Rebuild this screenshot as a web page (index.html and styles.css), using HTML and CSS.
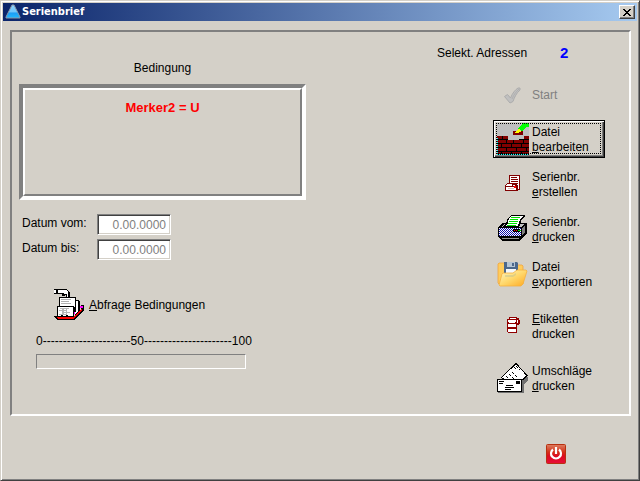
FILE: index.html
```html
<!DOCTYPE html>
<html lang="de">
<head>
<meta charset="utf-8">
<title>Serienbrief</title>
<link rel="stylesheet" href="styles.css">
</head>
<body>
<div class="window">
  <header class="titlebar">
    <svg class="app-icon" width="16" height="16" viewBox="0 0 16 16" aria-hidden="true">
      <defs><linearGradient id="tri" x1="0" y1="0" x2="0" y2="1"><stop offset="0" stop-color="#8ed4ff"/><stop offset=".55" stop-color="#6cc4fc"/><stop offset=".6" stop-color="#1c9cf4"/><stop offset="1" stop-color="#20b8ff"/></linearGradient></defs>
      <path d="M7 1h2l6 12v1H1v-1z" fill="url(#tri)" stroke="#8c98a8"/>
    </svg>
    <h1 class="title">Serienbrief</h1>
    <button class="close" type="button" aria-label="Schließen">
      <svg width="8" height="7" viewBox="0 0 8 7" shape-rendering="crispEdges"><path d="M0 0h2v1h1v1h2V1h1V0h2v1H7v1H6v1H5v1h1v1h1v1h1v1H6V6H5V5H3v1H2v1H0V6h1V5h1V4h1V3H2V2H1V1H0z"/></svg>
    </button>
  </header>

  <main class="panel">
    <section class="left">
      <h2 class="caption">Bedingung</h2>
      <div class="condition"><div class="condition-inner">Merker2 = U</div></div>
      <form class="dates">
        <label for="von">Datum vom:</label><input id="von" type="text" value="0.00.0000">
        <label for="bis">Datum bis:</label><input id="bis" type="text" value="0.00.0000">
      </form>
      <button class="query" type="button">
        <svg width="32" height="32" viewBox="0 0 32 32" shape-rendering="crispEdges" aria-hidden="true">
          <path d="M1 28h20l7-7v-4h3v5L21 32H4l-3-3z" fill="#000"/>
          <path d="M3 29h17v2H5z" fill="#f00"/><path d="M20 29l9-9v2l-9 9z" fill="#e00"/>
          <path d="M21 24h3v2h-3zM27 18h3v2h-3z" fill="#f0f"/>
          <path d="M22 12h3l2 2v8l-5 5z" fill="#000"/><path d="M22 13h2l1 1v9l-3 3z" fill="#fff"/><path d="M22 16h1v8h-1z" fill="#000"/>
          <path d="M6 9h17v15H6z" fill="#000"/><path d="M7 10h15v9H7z" fill="#fff"/>
          <path d="M8 11h10v1H8zM8 13h8v1H8zM8 15h10v1H8z" fill="#b0b0b0"/>
          <path d="M4 18h17v11H4z" fill="#000"/><path d="M5 19h15v9H5z" fill="#fff"/>
          <path d="M7 20h9v1H7zM6 22h7v1H6zM9 24h8v1H9zM6 26h8v1H6zM9 21h2v5H9zM13 21h1v5h-1z" fill="#b8b8b8"/>
          <path d="M8 27h2v1H8zM13 27h2v1h-2z" fill="#000"/>
          <path d="M1 1h12l3 2 1 2v5h-4V7l-2 1h-2V6H1z" fill="#000"/>
          <path d="M1 2h2v3H1zM5 2h8l2 2v5h-1V6h-3V5H5z" fill="#fff"/>
        </svg>
        <span><u>A</u>bfrage Bedingungen</span>
      </button>
      <div class="scale" id="scale">0----------------------50----------------------100</div>
      <div class="progress" role="progressbar" aria-labelledby="scale" aria-valuenow="0" aria-valuemin="0" aria-valuemax="100"></div>
    </section>

    <section class="right">
      <div class="count"><span>Selekt. Adressen</span><output class="number">2</output></div>
      <div class="actions">
        <button class="action" type="button" disabled>
          <svg width="32" height="32" viewBox="0 0 32 32" aria-hidden="true"><path d="M7.500 18.500l3-2 3 3.500c2-5 4.500-8 7.500-10h2v2c-3.500 3-5.500 7-7 11.500l-3 1.500z" fill="#c0c0c0" stroke="#acacac"/><path d="M15 21c2-5 4-7 7-10" fill="none" stroke="#b0b0b0"/></svg>
          <span>Start</span>
        </button>
        <button class="action focused" type="button">
          <svg width="32" height="32" viewBox="0 0 32 32" shape-rendering="crispEdges" aria-hidden="true">
            <path d="M0 0h32v32H0z" fill="#c0c0c0"/>
            <path d="M0 13h11v4h11v-1h5v-3h5v19H0z" fill="#000"/>
            <path d="M0 13h5v3H0zM6 13h5v3H6zM0 17h9v3H0zM10 17h6v3h-6zM17 17h9v3h-9zM27 17h5v3h-5zM27 13h5v3h-5zM0 21h4v3H0zM5 21h9v3H5zM15 21h9v3h-9zM25 21h7v3h-7zM0 25h9v3H0zM10 25h9v3h-9zM20 25h9v3h-9zM30 25h2v3h-2zM0 29h4v2H0zM5 29h9v2H5zM15 29h9v2h-9zM25 29h7v2h-7z" fill="#800000"/>
            <path d="M16 8h10v4H16z" fill="#800000"/>
            <path d="M18 10l3-4h2v2h2l-4 2z" fill="#ff0"/>
            <path d="M21 6l3-4 3-2h5v4h-3l-2 3-3 1-1-2z" fill="#0f0"/>
            <path d="M.5 32V14M0 31.500h32" stroke="#0ff" stroke-dasharray="1 1"/>
          </svg>
          <span>Datei<br><u>b</u>earbeiten</span>
        </button>
        <button class="action" type="button">
          <svg width="32" height="32" viewBox="0 0 32 32" shape-rendering="crispEdges" aria-hidden="true">
            <path d="M12 7h11v15H12z" fill="#800000"/><path d="M13 8h9v13h-9z" fill="#fff"/>
            <path d="M14 9h6v1h-6zM14 11h7v1h-7zM14 13h7v1h-7zM16 15h5v1h-5z" fill="#800000"/>
            <path d="M10 15h6l5 2v6H8v-6z" fill="#800000"/>
            <path d="M10 16h5v2H9v-1zM9 19h10v3H9zM16 17h2v1h-2z" fill="#fff"/>
            <path d="M11 20h6v1h-6z" fill="#e0c0c0"/><path d="M17 18h2v2h-2z" fill="#f00"/>
          </svg>
          <span>Serienbr.<br><u>e</u>rstellen</span>
        </button>
        <button class="action" type="button">
          <svg width="32" height="32" viewBox="0 0 32 32" shape-rendering="crispEdges" aria-hidden="true">
            <path d="M1 14l5-4h23l1 1v9l-5 5v1l-3 2H5l-2-2-2-2z" fill="#000"/>
            <path d="M4 14l4-3h20l-4 3z" fill="#c0c0c0"/>
            <path d="M2 15h22v8H2z" fill="#1010a8"/>
            <path d="M2 15.500h22M2 17.500h22M2 19.500h22M2 21.500h22" stroke="#fff" stroke-dasharray="1 1"/>
            <path d="M3 16.500h21M3 18.500h21M3 20.500h21M3 22.500h21" stroke="#fff" stroke-dasharray="1 1"/>
            <path d="M25 15l3-3v7l-3 3z" fill="#808080"/>
            <path d="M5 25h17v1H5z" fill="#909090"/>
            <path d="M6 13l3-2 2-6 3-3h14v2l-3 2-3 8H6z" fill="#000"/>
            <path d="M9 13l2-3 1-5 3-2h11l-3 3-2 7z" fill="#fff"/>
            <path d="M14 4h9v1h-9zM13 6h8v1h-8zM12 8h9v1h-9zM11 10h9v1h-9z" fill="#00e000"/><path d="M10 12h9v1h-9z" fill="#00e000"/>
            <path d="M16 16h7v3h-7z" fill="#000"/><path d="M17 17h1v1h-1zM19 17h1v1h-1z" fill="#f00"/><path d="M21 17h3v1h-3z" fill="#0c0"/>
          </svg>
          <span>Serienbr.<br><u>d</u>rucken</span>
        </button>
        <button class="action" type="button">
          <svg width="32" height="32" viewBox="0 0 32 32" aria-hidden="true">
            <defs><linearGradient id="fold" x1="0" y1="0" x2="1" y2="1"><stop offset="0" stop-color="#fff6c4"/><stop offset=".5" stop-color="#ffd86c"/><stop offset="1" stop-color="#ffa820"/></linearGradient></defs>
            <path d="M1 6l1-1h6l2 2h15l1 1v18H2l-1-1z" fill="#ffcc5c" stroke="#f0a43c" stroke-width=".8"/>
            <path d="M7 4h13l1 1v11H7z" fill="#4c688c"/><path d="M10 4h8v5h-8z" fill="#b4c4d4"/><path d="M15 5h2v3h-2z" fill="#4c688c"/><path d="M9 11h10v6H9z" fill="#f4f8fc"/>
            <path d="M2 27l3-11 1-1h10l4-3h9l1 1-4 13-2 2H3z" fill="url(#fold)" stroke="#f4b040" stroke-width=".8"/>
            <path d="M8 17h8l3-2v2l-3 2H8z" fill="#a4b49c" opacity=".35"/>
          </svg>
          <span>Datei<br><u>e</u>xportieren</span>
        </button>
        <button class="action gap" type="button">
          <svg width="32" height="32" viewBox="0 0 32 32" shape-rendering="crispEdges" aria-hidden="true">
            <path d="M12 7h8v1h2v2h1v4h-1v1h-2v8h-9v-1h-1V9h2z" fill="#900000"/>
            <path d="M13 8h6v1h-6zM11 10h8v2h-8zM11 14h8v3h-8zM11 19h8v3h-8zM20 10h1v3h-1zM12 12h6v1h-6z" fill="#fff"/>
          </svg>
          <span><u>E</u>tiketten<br>drucken</span>
        </button>
        <button class="action gap" type="button">
          <svg width="32" height="32" viewBox="0 0 32 32" shape-rendering="crispEdges" aria-hidden="true">
            <path d="M17 2l14 13v3L22 28l-6-6z" fill="#707070"/>
            <path d="M4.500 15.500L19 1.500l11 12L18 26z" fill="#fff" stroke="#000"/>
            <path d="M9 14l5 5M12 12l6 6M15 10l5 5M19 4l4 4M17 5l3 3" stroke="#000" stroke-dasharray="3 1"/>
            <path d="M1 31h26V18h-2v11H1z" fill="#707070"/>
            <path d="M0 17h25v13H0z" fill="#000"/><path d="M1 18h23v11H1z" fill="#fff"/>
            <path d="M2 19h5v1H2zM2 21h4v1H2zM9 23h7v1H9zM8 25h9v1H8zM8 27h6v1H8zM19 19h4v3h-4z" fill="#000"/>
          </svg>
          <span>Umschläge<br><u>d</u>rucken</span>
        </button>
      </div>
    </section>
  </main>

  <footer class="footer">
    <button class="power" type="button" aria-label="Beenden">
      <svg width="20" height="20" viewBox="0 0 20 20">
        <defs><linearGradient id="pw" x1="0" y1="0" x2="0" y2="1"><stop offset="0" stop-color="#dc8064"/><stop offset=".4" stop-color="#d43018"/><stop offset=".6" stop-color="#dc0c20"/><stop offset="1" stop-color="#e80c38"/></linearGradient></defs>
        <rect x=".5" y=".5" width="19" height="19" rx="1" fill="url(#pw)" stroke="#b83010"/>
        <path d="M7 5.500a5 5 0 1 0 6 0M10 3v7" fill="none" stroke="#fff" stroke-width="2.200"/>
      </svg>
    </button>
  </footer>
</div>
</body>
</html>
```
FILE: styles.css
```css
* {
  box-sizing: border-box;
}

body {
  margin: 0;
  background: #d4d0c8;
  color: #000;
  font: 12px/15px "Liberation Sans", Arial, sans-serif;
}

button {
  font: inherit;
  color: inherit;
  background: none;
  border: 0;
  padding: 0;
  text-align: left;
}

svg {
  display: block;
  flex: none;
}

.window {
  min-height: 100vh;
  padding: 1px;
  border: 1px solid;
  border-color: #d4d0c8 #404040 #404040 #d4d0c8;
  box-shadow: inset 1px 1px #fff, inset -1px -1px #808080;
}

.titlebar {
  display: flex;
  align-items: center;
  height: 18px;
  margin: 1px;
  padding: 0 2px;
  background: linear-gradient(to right, #0a246a, #a6caf0);
}

.title {
  flex: 1;
  margin: 0 0 0 1px;
  color: #fff;
  font: bold 11px/18px "DejaVu Sans Condensed", "DejaVu Sans", Tahoma, sans-serif;
}

.close {
  display: grid;
  place-items: center;
  width: 16px;
  height: 14px;
  background: #d4d0c8;
  border: 1px solid;
  border-color: #fff #404040 #404040 #fff;
  box-shadow: inset -1px -1px #808080;
}

.panel {
  display: flex;
  justify-content: space-between;
  margin: 9px 7px 0 8px;
  padding: 0 0 17px 7px;
  border: 2px solid;
  border-color: #808080 #fff #fff #808080;
}

.left {
  width: 287px;
  padding-top: 29px;
}

.caption {
  margin: 0 0 8px;
  font: inherit;
  text-align: center;
}

.condition {
  border: 4px solid;
  border-color: #808080 #fff #fff #808080;
}

.condition-inner {
  height: 108px;
  padding-top: 10px;
  border: 2px solid;
  border-color: #fff #808080 #808080 #fff;
  color: #f00;
  font-weight: bold;
  font-size: 13px;
  text-align: center;
}

.dates {
  display: grid;
  grid-template-columns: 75px 74px;
  row-gap: 4px;
  margin: 14px 0 0 3px;
}

.dates label {
  padding-top: 2px;
}

.dates input {
  width: 100%;
  height: 21px;
  padding: 1px 4px 0;
  background: #fff;
  border: 1px solid;
  border-color: #808080 #fff #fff #808080;
  box-shadow: inset 1px 1px #404040, inset -1px -1px #d4d0c8;
  color: #808080;
  font: inherit;
  text-align: right;
}

.query {
  display: flex;
  align-items: center;
  gap: 4px;
  margin: 28px 0 0 34px;
}

.query span {
  padding-top: 2px;
}

.scale {
  margin: 14px 0 0 17px;
  white-space: nowrap;
}

.progress {
  width: 210px;
  height: 15px;
  margin: 5px 0 0 17px;
  border: 1px solid;
  border-color: #808080 #fff #fff #808080;
}

.right {
  width: 192px;
  padding-top: 12px;
}

.count {
  display: flex;
  align-items: center;
  gap: 33px;
  line-height: 18px;
}

.number {
  color: #00f;
  font-size: 15px;
  font-weight: bold;
}

.actions {
  display: flex;
  flex-direction: column;
  gap: 7px;
  width: 112px;
  margin: 13px 0 0 56px;
}

.action {
  display: flex;
  align-items: center;
  gap: 3px;
  height: 38px;
  padding: 0 4px;
}

.action span {
  padding-top: 2px;
}

.action:disabled {
  color: #808080;
}

.action.gap {
  margin-top: 7px;
}

.focused {
  padding: 0 3px;
  border: 1px solid #000;
  box-shadow: inset 1px 1px #fff, inset -1px -1px #404040, inset -2px -2px #808080;
  position: relative;
}

.focused::after {
  content: "";
  position: absolute;
  inset: 2px 3px 3px 2px;
  border: 1px dotted #000;
}

.footer {
  display: flex;
  justify-content: flex-end;
  padding: 28px 72px 14px;
}
```
